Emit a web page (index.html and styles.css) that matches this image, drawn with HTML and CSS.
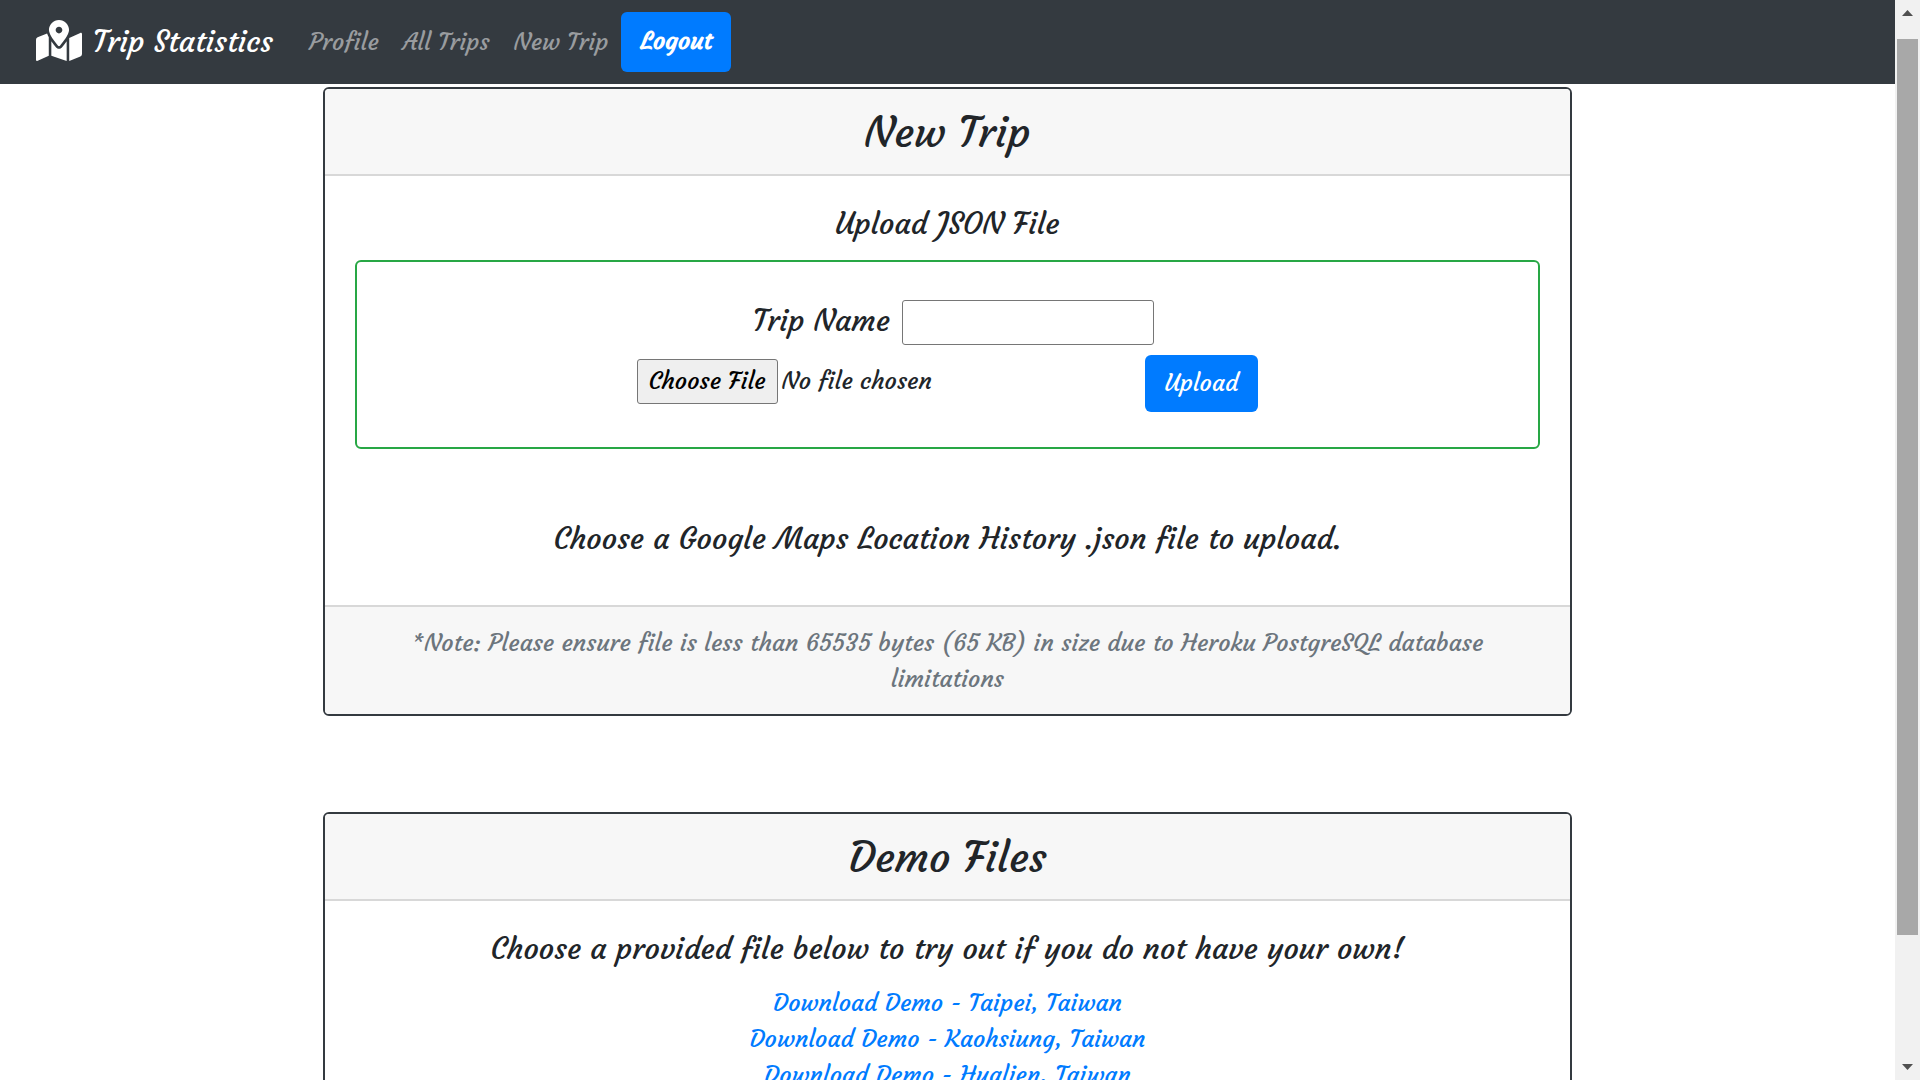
FILE: index.html
```html
<!DOCTYPE html>
<html lang="en">
<head>
<meta charset="utf-8">
<meta name="viewport" content="width=device-width, initial-scale=1">
<title>Trip Statistics</title>
<link rel="stylesheet" href="styles.css">
</head>
<body>
<div class="viewport">
  <div class="page">
    <nav class="navbar">
      <a class="brand" href="#">
        <svg class="brand-icon" viewBox="0 0 576 512" aria-hidden="true"><path fill="currentColor" d="M288 0c-69.59 0-126 56.41-126 126 0 56.26 82.35 158.8 113.9 196.02 6.39 7.54 17.82 7.54 24.2 0C331.65 284.8 414 182.26 414 126 414 56.41 357.59 0 288 0zm0 168c-23.2 0-42-18.8-42-42s18.8-42 42-42 42 18.8 42 42-18.8 42-42 42zM20.12 215.95A32.006 32.006 0 0 0 0 245.66v250.32c0 11.32 11.43 19.06 21.94 14.86L160 448V214.92c-8.84-15.98-16.07-31.54-21.25-46.42L20.12 215.95zM288 359.67c-14.07 0-27.38-6.18-36.51-16.96-19.66-23.2-40.57-49.62-59.49-76.72v182l192 64V266c-18.92 27.09-39.82 53.52-59.49 76.72-9.13 10.77-22.44 16.95-36.51 16.95zm266.06-198.51L416 224v288l139.88-55.95A31.996 31.996 0 0 0 576 426.34V176.02c0-11.32-11.43-19.06-21.94-14.86z"/></svg>
        <span>Trip Statistics</span>
      </a>
      <div class="nav-links">
        <a class="nav-link" href="#">Profile</a>
        <a class="nav-link" href="#">All Trips</a>
        <a class="nav-link" href="#">New Trip</a>
      </div>
      <button class="btn btn-logout" type="button">Logout</button>
    </nav>
    <main class="content">
      <section class="card">
        <h2 class="card-header">New Trip</h2>
        <div class="card-body">
          <h4 class="card-title">Upload JSON File</h4>
          <form class="upload-box">
            <div class="name-row">
              <label class="name-label" for="trip-name">Trip Name</label>
              <input class="name-input" id="trip-name" type="text">
            </div>
            <div class="file-row">
              <input class="file-input" type="file" aria-label="JSON file">
              <button class="btn btn-upload" type="button">Upload</button>
            </div>
          </form>
          <p class="hint">Choose a Google Maps Location History .json file to upload.</p>
        </div>
        <div class="card-footer">*Note: Please ensure file is less than 65535 bytes (65 KB) in size due to Heroku PostgreSQL database limitations</div>
      </section>
      <section class="card">
        <h2 class="card-header">Demo Files</h2>
        <div class="card-body">
          <h4 class="card-title">Choose a provided file below to try out if you do not have your own!</h4>
          <div class="demo-links">
            <a href="#">Download Demo - Taipei, Taiwan</a>
            <a href="#">Download Demo - Kaohsiung, Taiwan</a>
            <a href="#">Download Demo - Hualien, Taiwan</a>
          </div>
        </div>
      </section>
    </main>
  </div>
  <div class="scrollbar" aria-hidden="true">
    <svg class="arrow" viewBox="0 0 11 6"><path d="M0 6L5.500 0L11 6z"/></svg>
    <div class="track"><div class="thumb"></div></div>
    <svg class="arrow" viewBox="0 0 11 6"><path d="M0 0H11L5.500 6z"/></svg>
  </div>
</div>
</body>
</html>
```
FILE: styles.css
```css
*, *::before, *::after { box-sizing: border-box; }

body {
  margin: 0;
  background: #fff;
  color: #212529;
  font: 24px/36px Courgette, Lato, sans-serif;
}

.viewport {
  display: grid;
  grid-template-columns: minmax(0, 1fr) 25px;
  height: 100vh;
  overflow: hidden;
}

.page { min-width: 0; overflow: hidden; }

a { color: #007bff; text-decoration: none; }

/* Navigation */
.navbar {
  display: flex;
  align-items: center;
  padding: 12px 36px;
  background: #343a40;
}

.brand {
  display: flex;
  align-items: center;
  gap: 11px;
  margin-right: 36px;
  color: #fff;
  font-size: 30px;
}

.brand-icon { width: 46px; height: 41px; margin-bottom: 3px; }

.nav-links { display: flex; gap: 24px; margin-right: 12px; }

.nav-link { color: #999c9f; }

.btn {
  padding: 10px 20px 11px;
  border: 0;
  border-radius: 6px;
  background: #007bff;
  color: #fff;
  font: inherit;
}

.btn-logout { padding: 11px 19px 13px 20px; font-weight: 700; }

/* Cards */
.content {
  display: flex;
  flex-direction: column;
  gap: 96px;
  width: calc(200% / 3 - 15px);
  margin: 3px auto 0;
}

.card {
  border: 2px solid #343a40;
  border-radius: 6px;
  overflow: hidden;
  text-align: center;
}

.card-header {
  margin: 0;
  padding: 19px 30px 18px;
  border-bottom: 2px solid #d8d8d8;
  background: #f7f7f7;
  font-size: 42px;
  font-weight: 400;
  line-height: 48px;
}

.card-body { padding: 30px; }

.card-title {
  margin: 0 0 18px;
  font-size: 30px;
  font-weight: 400;
  line-height: 36px;
}

.upload-box {
  padding: 38px 38px 35px;
  border: 2px solid #28a745;
  border-radius: 6px;
}

.name-row, .file-row {
  display: flex;
  justify-content: center;
}

.name-row { gap: 12px; margin: 0 0 10px 12px; }

.name-label { font-size: 30px; line-height: 41px; }

.name-input {
  width: 252px;
  height: 45px;
  border: 1px solid #767676;
  border-radius: 3px;
  background: #fff;
  font: inherit;
}

.file-input { width: 508px; padding-top: 4px; font: inherit; text-align: left; }

.file-input::file-selector-button {
  height: 45px;
  padding: 0 11px 2px;
  border: 1px solid #767676;
  border-radius: 3px;
  background: #efefef;
  color: #000;
  font: inherit;
}

.hint {
  margin: 72px 0 18px;
  font-size: 30px;
  line-height: 36px;
}

.card-footer {
  padding: 18px 30px 17px;
  border-top: 2px solid #d8d8d8;
  background: #f7f7f7;
  color: #6c757d;
}

.demo-links { display: flex; flex-direction: column; align-items: center; }

/* Scrollbar */
.scrollbar {
  display: flex;
  flex-direction: column;
  align-items: center;
  gap: 23px;
  padding: 10px 0;
  background: #f1f1f1;
}

.arrow { width: 11px; height: 6px; fill: #505050; }

.track { flex: 1; width: 21px; }

.thumb { height: 89.4%; background: #a8a8a8; }
```
